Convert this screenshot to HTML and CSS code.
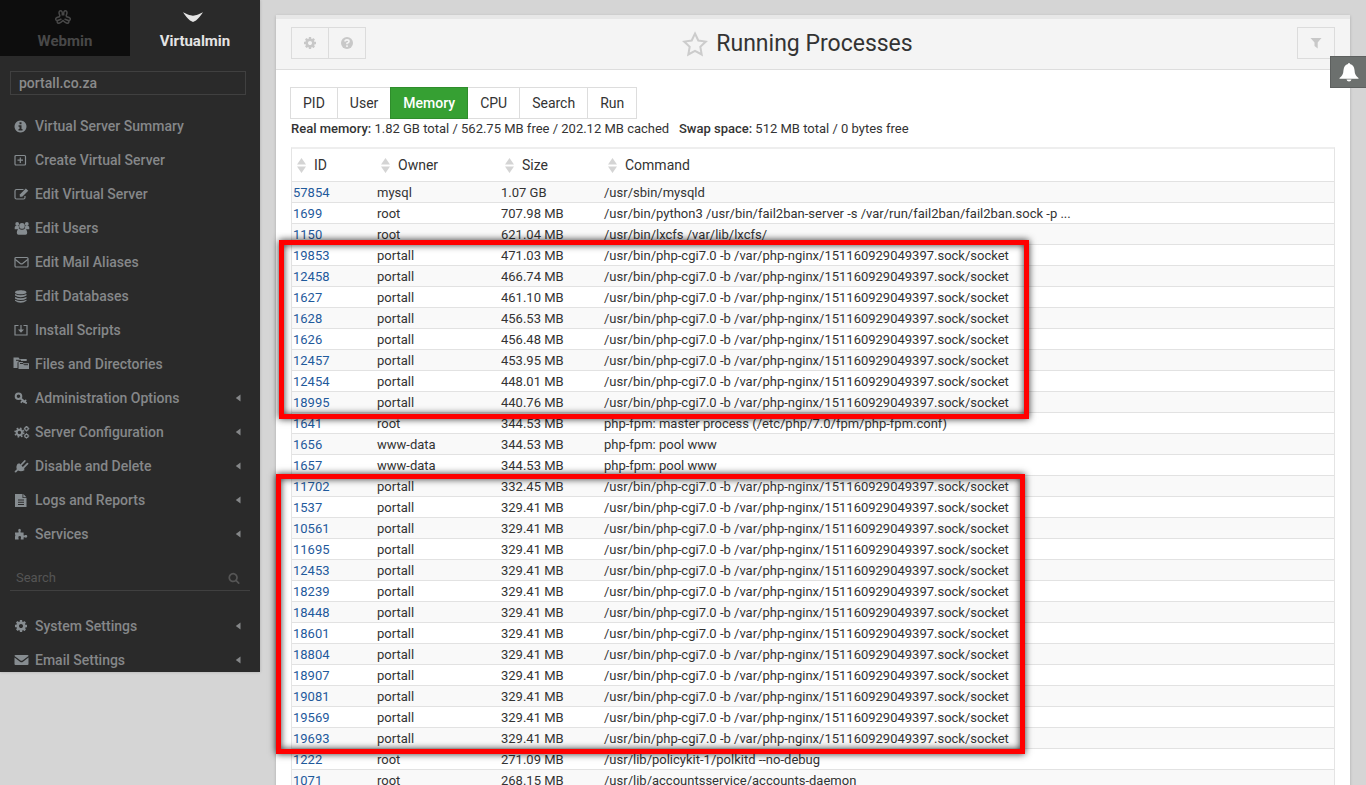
FILE: index.html
```html
<!DOCTYPE html>
<html lang="en">
<head>
  <meta charset="UTF-8">
  <meta name="viewport" content="width=device-width, initial-scale=1.0">
  <title>Running Processes</title>
  <link rel="stylesheet" href="styles.css">
</head>
<body>

  <svg class="sprite" width="0" height="0" aria-hidden="true">
    <symbol id="i-cog" viewBox="0 0 1792 1792"><path d="M1152 896q0-106-75-181t-181-75-181 75-75 181 75 181 181 75 181-75 75-181zm512-109v222q0 12-8 23t-20 13l-185 28q-19 54-39 91 35 50 107 138 10 12 10 25t-9 23q-27 37-99 108t-94 71q-12 0-26-9l-138-108q-44 23-91 38-16 136-29 186-7 28-36 28h-222q-14 0-24.500-8.500t-11.500-21.500l-28-184q-49-16-90-37l-141 107q-10 9-25 9-14 0-25-11-126-114-165-168-7-10-7-23 0-12 8-23 15-21 51-66.500t54-70.500q-27-50-41-99l-183-27q-13-2-21-12.500t-8-23.500v-222q0-12 8-23t19-13l186-28q14-46 39-92-40-57-107-138-10-12-10-24 0-10 9-23 26-36 98.500-107.500t94.500-71.500q13 0 26 10l138 107q44-23 91-38 16-136 29-186 7-28 36-28h222q14 0 24.500 8.500t11.500 21.500l28 184q49 16 90 37l142-107q9-9 24-9 13 0 25 10 129 119 165 170 7 8 7 22 0 12-8 23-15 21-51 66.500t-54 70.500q26 50 41 98l183 28q13 2 21 12.500t8 23.500z"/></symbol>
    <symbol id="i-search" viewBox="0 0 1792 1792"><path d="M1216 832q0-185-131.500-316.500t-316.500-131.500-316.500 131.500-131.500 316.500 131.500 316.500 316.500 131.500 316.500-131.500 131.500-316.500zm512 832q0 52-38 90t-90 38q-54 0-90-38l-343-342q-179 124-399 124-143 0-273.500-55.500t-225-150-150-225-55.500-273.500 55.500-273.500 150-225 225-150 273.500-55.500 273.500 55.500 225 150 150 225 55.500 273.500q0 220-124 399l343 343q37 37 37 90z"/></symbol>
    <symbol id="i-sort" viewBox="0 0 9 15"><path d="M0 6.500L4.500 0 9 6.500zM0 8.500h9L4.500 15z"/></symbol>
    <symbol id="i-caret" viewBox="0 0 6 8"><path d="M5.500.500v7L.8 4z"/></symbol>
  </svg>

  <div class="page">
    <aside class="sidebar">
      <nav class="switch">
        <a href="#" class="switch-item">
          <svg class="switch-icon" viewBox="0 0 20 16" fill="none" stroke="currentColor" stroke-width="1.500"><path d="M7 7.500L6 4Q6 1.500 8 1.700 9.200 2 9.300 4V6.500M13 7.500L14 4Q14 1.500 12 1.700 10.800 2 10.700 4V6.500M7 7.500L4 8.500Q2 9.500 3 11q1 1 3 0l2.500-1M13 7.500l3 1q2 1 1 2.500-1 1-3 0l-2.500-1M4 11.700Q4 14.300 6 14.300 7.500 14 10 11.500 12.500 14 14 14.300 16 14.300 16 11.700"/></svg>
          Webmin
        </a>
        <a href="#" class="switch-item active">
          <svg class="switch-icon" viewBox="0 0 20 16"><path d="M0 3.200C3 4.600 6 6 7.600 6.200L10 6.800l2.400-.6C14 6 17 4.600 20 3.200 18 6 15.500 9.500 13 11.500L10 13 7 11.500C4.500 9.500 2 6 0 3.200z"/></svg>
          Virtualmin
        </a>
      </nav>

      <select class="domain" aria-label="Domain">
        <option>portall.co.za</option>
      </select>

      <ul class="menu">
        <li><a href="#"><svg class="icon" viewBox="0 0 18 14"><path fill-rule="evenodd" d="M7.500 1.500a6 6 0 1 0 .01 0zM6.500 3.300h2v1.900h-2zM5.500 6.200h3v3.700h1v1.500h-4V9.900h1V7.700h-1z"/></svg>Virtual Server Summary</a></li>
        <li><a href="#"><svg class="icon line" viewBox="0 0 18 14"><rect x="2" y="2.500" width="10.500" height="9.500" rx="1"/><path d="M7.300 4.500v5.500M4.500 7.200h5.500"/></svg>Create Virtual Server</a></li>
        <li><a href="#"><svg class="icon" viewBox="0 0 18 14"><path class="stroke" d="M10.500 2.500H3.500Q2 2.500 2 4v6.500Q2 12 3.500 12h7Q12 12 12 10.500V9"/><path d="M12.800 1.500l2.500 2.200L9.200 9.800H6.800V7.500z"/></svg>Edit Virtual Server</a></li>
        <li><a href="#"><svg class="icon" viewBox="0 0 18 14"><circle cx="4.200" cy="3" r="1.900"/><circle cx="13.800" cy="3" r="1.900"/><circle cx="9" cy="4.900" r="2.800"/><path d="M1.700 8.200Q1.500 4.800 3 5.100h2.800Q5.700 6.800 6.600 7.500L5 8.300zM16.300 8.200Q16.500 4.800 15 5.100h-2.800Q12.300 6.800 11.400 7.500L13 8.300zM6 7.800q3 2 6 0 2.200.7 2.200 4.200 0 1.700-1.700 1.700h-7Q3.800 13.700 3.800 12 3.800 8.500 6 7.800z"/></svg>Edit Users</a></li>
        <li><a href="#"><svg class="icon line" viewBox="0 0 18 14"><rect x="2" y="2.500" width="13" height="9.500" rx="1"/><path d="M2.300 4.500l5 4q1.200.8 2.400 0l5-4"/></svg>Edit Mail Aliases</a></li>
        <li><a href="#"><svg class="icon" viewBox="0 0 18 14"><path d="M2 3.200C2 .5 13.500.5 13.500 3.200S2 5.900 2 3.200zM2 5q5.700 2.600 11.500 0v1.500Q11 8.200 7.700 8.200T2 6.500zM2 7.900q5.700 2.600 11.500 0v1.500q-2.500 1.700-5.800 1.700T2 9.400zM2 10.800q5.700 2.600 11.500 0v1q-2.500 1.900-5.800 1.900T2 11.800z"/></svg>Edit Databases</a></li>
        <li><a href="#"><svg class="icon" viewBox="0 0 18 14"><path class="stroke" d="M5.500 2.500H2V12H14V2.500H10.500M8 2v5"/><path d="M5 6.500h6L8 9.800z"/></svg>Install Scripts</a></li>
        <li><a href="#"><svg class="icon" viewBox="0 0 18 14"><path d="M.5.500h5l1.200 1.500h7v2H6L4.500 5.500V11H.5z"/><path d="M5.500 5h4l1 1.300h5.500V12H5.500z"/><path class="cut" d="M3 3.300h5M7 6.500h3l1.200 1.200H15"/></svg>Files and Directories</a></li>
        <li><a href="#"><svg class="icon" viewBox="0 0 18 14"><circle class="ring" cx="5.500" cy="5.200" r="2.800"/><path class="thick" d="M7.500 7.200l5.700 4.800M9.700 9.700L8.300 11.200M12.600 9.500L11 11.200"/></svg>Administration Options</a><svg class="caret"><use href="#i-caret"/></svg></li>
        <li><a href="#"><svg class="icon" viewBox="0 0 18 14"><circle class="ring" cx="6.400" cy="7.500" r="2.700"/><circle class="teeth" cx="6.400" cy="7.500" r="4.300"/><circle class="ring thin" cx="13.500" cy="3.700" r="1.700"/><circle class="ring thin" cx="13.500" cy="11" r="1.700"/><path class="stroke" d="M13.500 1v1M13.500 5.500v1M10.900 3.700h1M15.300 3.700h1M13.500 8.300v1M13.500 12.600v1M10.900 11h1M15.300 11h1"/></svg>Server Configuration</a><svg class="caret"><use href="#i-caret"/></svg></li>
        <li><a href="#"><svg class="icon" viewBox="0 0 18 14"><path d="M5 4.500l6.800 6.600Q8 13.300 5 11.500L3 13.500 1.700 13.300V12.300L3.800 10.300Q2.600 7 5 4.500z"/><path class="thick" d="M8 6l3.800-4M10.500 8.700l4-4"/><path d="M6 4l5.500 5.700-2 1.300-5-5z"/></svg>Disable and Delete</a><svg class="caret"><use href="#i-caret"/></svg></li>
        <li><a href="#"><svg class="icon" viewBox="0 0 18 14"><path fill-rule="evenodd" d="M2 1h7.500v4h4v9H2zM10.300 1l3.200 3.200h-3.200zM5 6.500v1h6v-1zM5 8.800v1h6v-1zM5 11.100v1h6v-1z"/></svg>Logs and Reports</a><svg class="caret"><use href="#i-caret"/></svg></li>
        <li><a href="#"><svg class="icon" viewBox="0 0 18 14"><path d="M2 5.500h3.500q.5-.8-.2-1.600-.6-2 1.200-2.200 1.900.2 1.300 2.200-.7.800-.2 1.600h3v2.700q.8.500 1.600-.1 2-.5 2.100 1.200-.1 1.800-2.100 1.300-.8-.6-1.600-.1V12.500H7.800q-.3-.8.200-1.500.5-1.800-1.300-2-1.800.2-1.300 2 .5.700.2 1.500H2v-3q.8-1.500 0-2.300z"/></svg>Services</a><svg class="caret"><use href="#i-caret"/></svg></li>
      </ul>

      <form class="find">
        <input type="search" placeholder="Search" aria-label="Search">
        <svg class="find-icon"><use href="#i-search"/></svg>
      </form>

      <ul class="menu">
        <li><a href="#"><svg class="icon cog"><use href="#i-cog"/></svg>System Settings</a><svg class="caret"><use href="#i-caret"/></svg></li>
        <li><a href="#"><svg class="icon" viewBox="0 0 18 14"><path d="M1.500 3q0-1 1-1h12q1 0 1 1L9.500 7.500q-1 .7-2 0zM1.500 4.500L7 8.700q1.500 1 3 0l5.500-4.200V11q0 1-1 1h-12q-1 0-1-1z"/></svg>Email Settings</a><svg class="caret"><use href="#i-caret"/></svg></li>
      </ul>
    </aside>

    <main class="main">
      <section class="panel">
        <header class="panel-head">
          <div class="btn-group">
            <button type="button" class="icon-btn" aria-label="Module config"><svg><use href="#i-cog"/></svg></button>
            <button type="button" class="icon-btn" aria-label="Help"><svg viewBox="0 0 14 14"><circle cx="7" cy="7" r="6"/><path class="mark" d="M5 5.600Q5 3.900 7 3.900t2 1.600Q9 6.500 7 7.200V8.200M7 9.300v1.700"/></svg></button>
          </div>
          <h1><svg class="star" viewBox="0 0 26 26"><path d="M13 2.500l3.300 7 7.500 1.100-5.500 5.200 1.400 7.700-6.700-3.700-6.700 3.700 1.400-7.700-5.500-5.200 7.500-1.100z"/></svg>Running Processes</h1>
          <button type="button" class="icon-btn" aria-label="Filter"><svg viewBox="0 0 14 14"><path d="M1.500 2h11L8.700 6.500V12.500L5.500 10V6.500z"/></svg></button>
        </header>

        <div class="panel-body">
          <nav class="tabs">
            <a href="#">PID</a>
            <a href="#">User</a>
            <a href="#" class="active">Memory</a>
            <a href="#">CPU</a>
            <a href="#">Search</a>
            <a href="#">Run</a>
          </nav>
          <p class="usage"><b>Real memory:</b> 1.82 GB total / 562.75 MB free / 202.12 MB cached &nbsp; <b>Swap space:</b> 512 MB total / 0 bytes free</p>

          <table class="processes">
            <thead>
              <tr>
                <th class="col-id"><svg class="sort"><use href="#i-sort"/></svg>ID</th>
                <th class="col-owner"><svg class="sort"><use href="#i-sort"/></svg>Owner</th>
                <th class="col-size"><svg class="sort"><use href="#i-sort"/></svg>Size</th>
                <th><svg class="sort"><use href="#i-sort"/></svg>Command</th>
              </tr>
            </thead>
            <tbody>
              <tr><td><a href="#">57854</a></td><td>mysql</td><td>1.07 GB</td><td>/usr/sbin/mysqld</td></tr>
              <tr><td><a href="#">1699</a></td><td>root</td><td>707.98 MB</td><td>/usr/bin/python3 /usr/bin/fail2ban-server -s /var/run/fail2ban/fail2ban.sock -p ...</td></tr>
              <tr><td><a href="#">1150</a></td><td>root</td><td>621.04 MB</td><td>/usr/bin/lxcfs /var/lib/lxcfs/</td></tr>
              <tr><td><a href="#">19853</a></td><td>portall</td><td>471.03 MB</td><td>/usr/bin/php-cgi7.0 -b /var/php-nginx/151160929049397.sock/socket</td></tr>
              <tr><td><a href="#">12458</a></td><td>portall</td><td>466.74 MB</td><td>/usr/bin/php-cgi7.0 -b /var/php-nginx/151160929049397.sock/socket</td></tr>
              <tr><td><a href="#">1627</a></td><td>portall</td><td>461.10 MB</td><td>/usr/bin/php-cgi7.0 -b /var/php-nginx/151160929049397.sock/socket</td></tr>
              <tr><td><a href="#">1628</a></td><td>portall</td><td>456.53 MB</td><td>/usr/bin/php-cgi7.0 -b /var/php-nginx/151160929049397.sock/socket</td></tr>
              <tr><td><a href="#">1626</a></td><td>portall</td><td>456.48 MB</td><td>/usr/bin/php-cgi7.0 -b /var/php-nginx/151160929049397.sock/socket</td></tr>
              <tr><td><a href="#">12457</a></td><td>portall</td><td>453.95 MB</td><td>/usr/bin/php-cgi7.0 -b /var/php-nginx/151160929049397.sock/socket</td></tr>
              <tr><td><a href="#">12454</a></td><td>portall</td><td>448.01 MB</td><td>/usr/bin/php-cgi7.0 -b /var/php-nginx/151160929049397.sock/socket</td></tr>
              <tr><td><a href="#">18995</a></td><td>portall</td><td>440.76 MB</td><td>/usr/bin/php-cgi7.0 -b /var/php-nginx/151160929049397.sock/socket</td></tr>
              <tr><td><a href="#">1641</a></td><td>root</td><td>344.53 MB</td><td>php-fpm: master process (/etc/php/7.0/fpm/php-fpm.conf)</td></tr>
              <tr><td><a href="#">1656</a></td><td>www-data</td><td>344.53 MB</td><td>php-fpm: pool www</td></tr>
              <tr><td><a href="#">1657</a></td><td>www-data</td><td>344.53 MB</td><td>php-fpm: pool www</td></tr>
              <tr><td><a href="#">11702</a></td><td>portall</td><td>332.45 MB</td><td>/usr/bin/php-cgi7.0 -b /var/php-nginx/151160929049397.sock/socket</td></tr>
              <tr><td><a href="#">1537</a></td><td>portall</td><td>329.41 MB</td><td>/usr/bin/php-cgi7.0 -b /var/php-nginx/151160929049397.sock/socket</td></tr>
              <tr><td><a href="#">10561</a></td><td>portall</td><td>329.41 MB</td><td>/usr/bin/php-cgi7.0 -b /var/php-nginx/151160929049397.sock/socket</td></tr>
              <tr><td><a href="#">11695</a></td><td>portall</td><td>329.41 MB</td><td>/usr/bin/php-cgi7.0 -b /var/php-nginx/151160929049397.sock/socket</td></tr>
              <tr><td><a href="#">12453</a></td><td>portall</td><td>329.41 MB</td><td>/usr/bin/php-cgi7.0 -b /var/php-nginx/151160929049397.sock/socket</td></tr>
              <tr><td><a href="#">18239</a></td><td>portall</td><td>329.41 MB</td><td>/usr/bin/php-cgi7.0 -b /var/php-nginx/151160929049397.sock/socket</td></tr>
              <tr><td><a href="#">18448</a></td><td>portall</td><td>329.41 MB</td><td>/usr/bin/php-cgi7.0 -b /var/php-nginx/151160929049397.sock/socket</td></tr>
              <tr><td><a href="#">18601</a></td><td>portall</td><td>329.41 MB</td><td>/usr/bin/php-cgi7.0 -b /var/php-nginx/151160929049397.sock/socket</td></tr>
              <tr><td><a href="#">18804</a></td><td>portall</td><td>329.41 MB</td><td>/usr/bin/php-cgi7.0 -b /var/php-nginx/151160929049397.sock/socket</td></tr>
              <tr><td><a href="#">18907</a></td><td>portall</td><td>329.41 MB</td><td>/usr/bin/php-cgi7.0 -b /var/php-nginx/151160929049397.sock/socket</td></tr>
              <tr><td><a href="#">19081</a></td><td>portall</td><td>329.41 MB</td><td>/usr/bin/php-cgi7.0 -b /var/php-nginx/151160929049397.sock/socket</td></tr>
              <tr><td><a href="#">19569</a></td><td>portall</td><td>329.41 MB</td><td>/usr/bin/php-cgi7.0 -b /var/php-nginx/151160929049397.sock/socket</td></tr>
              <tr><td><a href="#">19693</a></td><td>portall</td><td>329.41 MB</td><td>/usr/bin/php-cgi7.0 -b /var/php-nginx/151160929049397.sock/socket</td></tr>
              <tr><td><a href="#">1222</a></td><td>root</td><td>271.09 MB</td><td>/usr/lib/policykit-1/polkitd --no-debug</td></tr>
              <tr><td><a href="#">1071</a></td><td>root</td><td>268.15 MB</td><td>/usr/lib/accountsservice/accounts-daemon</td></tr>
            </tbody>
          </table>
        </div>
      </section>

      <!-- red frames around the portall processes -->
      <div class="mark-box first"></div>
      <div class="mark-box second"></div>

      <button type="button" class="bell" aria-label="Notifications"><svg viewBox="0 0 20 20"><path d="M10 1q1 0 1 1 4 .8 4.500 6 .2 5.500 4 8v.8H.5V16q3.800-2.500 4-8Q5 2.800 9 2 9 1 10 1zM7.500 17.500h5Q12 19.500 10 19.500T7.500 17.500z"/></svg></button>
    </main>
  </div>

</body>
</html>
```

FILE: styles.css
```css
* {
  box-sizing: border-box;
}

body {
  margin: 0;
  height: 100vh;
  overflow: hidden;
  background: #d5d5d5;
  color: #333;
  font-family: Roboto, "Liberation Sans", sans-serif;
  font-size: 13px;
}

a {
  text-decoration: none;
}

svg {
  fill: currentColor;
}

.sprite {
  position: absolute;
}

.page {
  display: flex;
  align-items: flex-start;
}

/* left menu */
.sidebar {
  flex: 0 0 260px;
  height: calc(100vh - 113px);
  overflow: hidden;
  background: #2a2a2a;
  box-shadow: 0 0 3px rgba(0, 0, 0, 0.2);
}

.switch {
  display: flex;
}

.switch-item {
  flex: 1;
  display: flex;
  flex-direction: column;
  align-items: center;
  gap: 6px;
  height: 56px;
  padding-top: 9px;
  background: #0d0d0d;
  color: #484848;
  font-size: 15px;
  font-weight: 700;
  line-height: 20px;
}

.switch-item.active {
  background: #2a2a2a;
  color: #e4e4e4;
}

.switch-icon {
  width: 20px;
  height: 16px;
  margin-right: 4px;
}

.switch-icon[fill="none"] {
  fill: none;
}

.domain {
  display: block;
  width: 236px;
  height: 24px;
  margin: 15px 10px 14px;
  padding: 0 8px;
  appearance: none;
  background: #2a2a2a;
  border: 1px solid #404040;
  border-radius: 0;
  color: #8a8a8a;
  font: 500 14px Roboto, sans-serif;
}

.menu {
  margin: 0;
  padding: 0;
  list-style: none;
}

.menu li {
  display: flex;
  align-items: center;
  justify-content: space-between;
  height: 34px;
  padding: 0 19px 0 13px;
}

.menu a {
  display: flex;
  align-items: center;
  gap: 4px;
  color: #858789;
  font-size: 14px;
  font-weight: 500;
  line-height: 20px;
}

.icon {
  width: 18px;
  height: 14px;
  color: #868c90;
}

.icon.cog {
  width: 14px;
  margin: 0 3px 0 1px;
}

.icon.line,
.icon .stroke {
  fill: none;
  stroke: currentColor;
  stroke-width: 1.2;
}

.icon .ring {
  fill: none;
  stroke: currentColor;
  stroke-width: 2;
}

.icon .ring.thin {
  stroke-width: 1.3;
}

.icon .teeth {
  fill: none;
  stroke: currentColor;
  stroke-width: 1.6;
  stroke-dasharray: 1.7 1.677;
}

.icon .thick {
  fill: none;
  stroke: currentColor;
  stroke-width: 1.8;
  stroke-linecap: round;
}

.icon .cut {
  fill: none;
  stroke: #2a2a2a;
}

.caret {
  width: 6px;
  height: 8px;
  color: #858789;
}

.find {
  display: flex;
  align-items: center;
  height: 26px;
  margin: 14px 10px 18px;
  padding: 0 10px 0 6px;
  border-bottom: 1px solid #404040;
}

.find input {
  flex: 1;
  min-width: 0;
  padding: 0;
  background: none;
  border: 0;
  color: #858789;
  font: 13px Roboto, sans-serif;
}

.find input::placeholder {
  color: #555;
}

.find-icon {
  width: 12px;
  height: 12px;
  color: #555;
}

/* content */
.main {
  position: relative;
  flex: 1;
  min-width: 0;
  padding: 15px 16px 0;
}

.panel {
  background: #fff;
  border-top: 4px solid #e7e7e7;
  box-shadow: 0 1px 3px rgba(0, 0, 0, 0.2);
}

.panel-head {
  display: flex;
  align-items: center;
  height: 51px;
  padding: 0 15px 2px;
  background: #f4f4f4;
  border-bottom: 1px solid #ddd;
}

.btn-group {
  display: flex;
}

.icon-btn {
  display: flex;
  align-items: center;
  justify-content: center;
  width: 38px;
  height: 32px;
  padding: 0;
  background: none;
  border: 1px solid #dcdcdc;
  color: #c8c8c8;
}

.icon-btn + .icon-btn {
  margin-left: -1px;
}

.icon-btn svg {
  width: 14px;
  height: 14px;
}

.icon-btn .mark {
  fill: none;
  stroke: #f4f4f4;
  stroke-width: 1.6;
}

h1 {
  display: flex;
  flex: 1;
  align-items: center;
  justify-content: center;
  gap: 8px;
  margin: 0;
  padding: 2px 68px 0 0;
  font-size: 23px;
  font-weight: 400;
  line-height: 32px;
}

.star {
  width: 26px;
  height: 26px;
  fill: none;
  stroke: #ccc;
  stroke-width: 2;
}

.panel-body {
  padding: 17px 15px;
}

.tabs {
  display: flex;
  margin-left: -1px;
}

.tabs a {
  height: 32px;
  margin-right: -1px;
  padding: 0 12px;
  border: 1px solid #ddd;
  color: #333;
  font-size: 14px;
  line-height: 30px;
}

.tabs a.active {
  position: relative;
  background: #36a033;
  border-color: #2f8d2c;
  color: #fff;
  font-weight: 500;
}

.usage {
  margin: 0 0 9px;
  line-height: 19px;
}

.usage b {
  font-weight: 500;
}

.processes {
  width: 100%;
  table-layout: fixed;
  border-spacing: 0;
  border: 1px solid #e4e4e4;
  border-top: 2px solid #eee;
}

.processes th {
  height: 33px;
  padding: 0 0 0 5px;
  border-bottom: 1px solid #e2e2e2;
  font-size: 14px;
  font-weight: 400;
  text-align: left;
}

.processes td {
  height: 21px;
  padding: 2px 1px 0;
  border-bottom: 1px solid #e2e2e2;
  line-height: 18px;
  white-space: nowrap;
}

.processes tbody tr:nth-child(odd) {
  background: #f9f9f9;
}

.processes a {
  color: #1f5a9c;
}

.col-id {
  width: 84px;
}

.col-owner {
  width: 124px;
}

.col-size {
  width: 103px;
}

.sort {
  width: 9px;
  height: 15px;
  margin-right: 8px;
  color: #d4d4d4;
  vertical-align: middle;
}

.mark-box {
  position: absolute;
  border: 5px solid #f00;
  box-shadow: 0 0 7px rgba(0, 0, 0, 0.8), inset 0 0 7px rgba(0, 0, 0, 0.8);
}

.mark-box.first {
  top: 240px;
  left: 19px;
  width: 750px;
  height: 179px;
}

.mark-box.second {
  top: 474px;
  left: 16px;
  width: 749px;
  height: 280px;
}

.bell {
  position: absolute;
  top: 56px;
  right: 0;
  display: flex;
  align-items: center;
  justify-content: center;
  width: 36px;
  height: 32px;
  padding: 0;
  background: #6c706e;
  border: 1px solid #5d605f;
  border-right: 0;
  color: #fff;
}

.bell svg {
  width: 20px;
  height: 20px;
}
```
